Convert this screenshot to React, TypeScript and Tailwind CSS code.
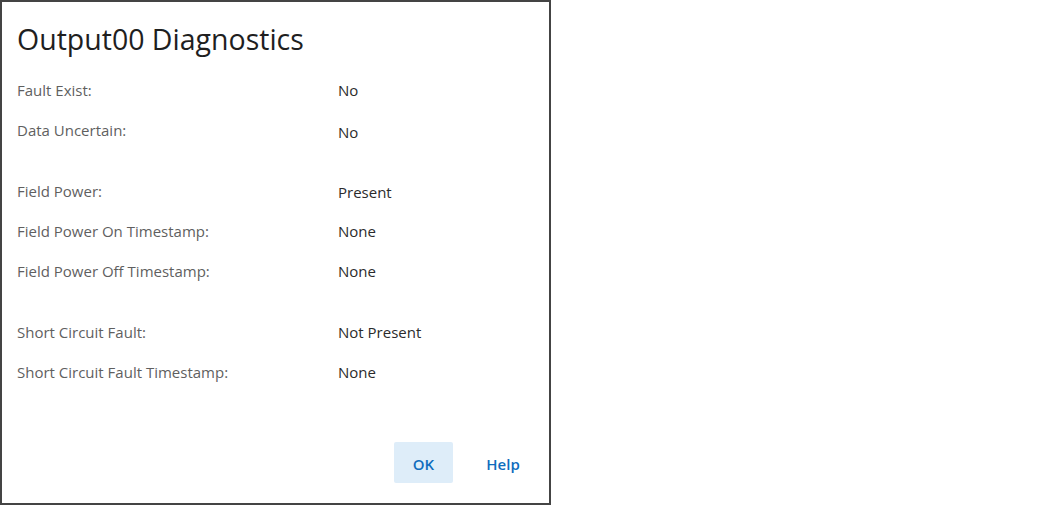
import React from "react";

const groups: [string, string, string][][] = [
  [
    ["Fault Exist:", "No", "pt-[1px]"],
    ["Data Uncertain:", "No", "pt-[4px]"],
  ],
  [
    ["Field Power:", "Present", "pt-[3px]"],
    ["Field Power On Timestamp:", "None", ""],
    ["Field Power Off Timestamp:", "None", ""],
  ],
  [
    ["Short Circuit Fault:", "Not Present", "pt-[1px]"],
    ["Short Circuit Fault Timestamp:", "None", "pt-[1px]"],
  ],
];

export default function App() {
  return (
    <div className="w-[1050px] h-[507px] bg-white" style={{ fontFamily: '"Segoe UI", "Open Sans", sans-serif' }}>
      <div className="w-[551px] h-[505px] border-2 border-[#444444] bg-white flex flex-col">
        <h1 className="text-[28.5px] leading-[36px] text-[#1f1f1f] pl-[15px] pt-[19px] m-0 font-normal">
          Output00 Diagnostics
        </h1>
        <div className="flex flex-col pt-[23px] gap-[41px]">
          {groups.map((g, gi) => (
            <div key={gi} className="flex flex-col gap-[20px]">
              {g.map(([l, v, off]) => (
                <div key={l} className="flex items-center h-[20px]">
                  <div className="w-[336px] pl-[15px] text-[15px] text-[#5f5f5f]">{l}</div>
                  <div className={`text-[15px] text-[#2b2b2b] ${off}`}>{v}</div>
                </div>
              ))}
            </div>
          ))}
        </div>
        <div className="mt-auto flex justify-end items-center gap-[21px] pr-[17px] pb-[20px]">
          <button className="w-[59px] h-[41px] pt-[4px] rounded-[2px] bg-[#deedf9] text-[#0f6cbd] text-[15px] font-semibold">OK</button>
          <button className="w-[58px] h-[41px] pt-[4px] text-[#0f6cbd] text-[15px] font-semibold">Help</button>
        </div>
      </div>
    </div>
  );
}
